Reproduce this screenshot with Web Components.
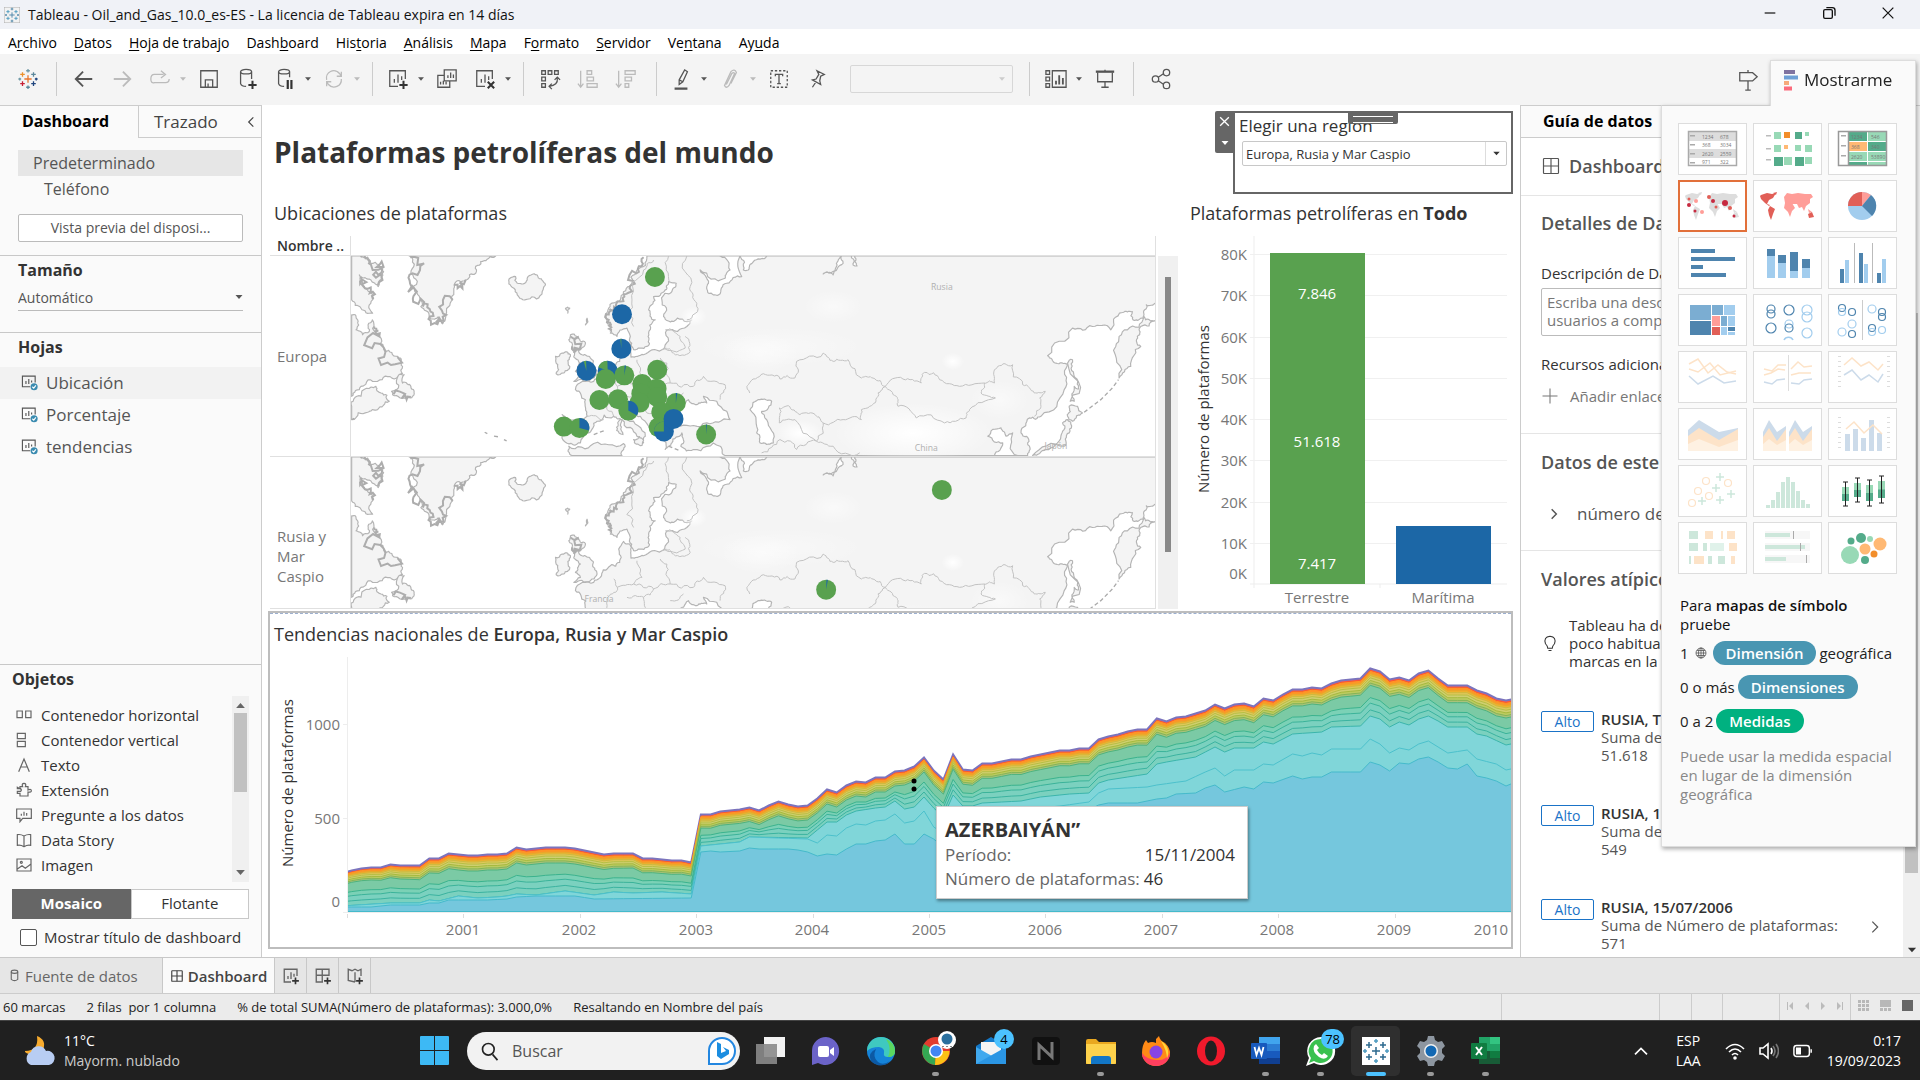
<!DOCTYPE html>
<html lang="es">
<head>
<meta charset="utf-8">
<title>Tableau - Oil_and_Gas_10.0_es-ES</title>
<style>
html,body{margin:0;height:100%}
body{font-family:"Open Sans","Noto Sans",sans-serif;font-size:15px;color:#333;background:#fff;overflow-x:hidden}
</style>
</head>
<body>
<tb-app></tb-app>
<script>
const BASE = `*{box-sizing:border-box}button,select,textarea,input{font:inherit;color:inherit;margin:0}
button{background:none;border:0;padding:0;text-align:left}h1,h2,h3,p,ul{margin:0;padding:0;font-weight:inherit}ul{list-style:none}svg{display:block}`;
function define(name, css, html, after) {
  const t = document.createElement('template');
  customElements.define(name, class extends HTMLElement {
    constructor() {
      super();
      this.attachShadow({ mode: 'open' });
    }
    connectedCallback() {
      if (this.shadowRoot.firstChild) return;
      t.innerHTML = `<style>${BASE}${css}</style>` + (typeof html === 'function' ? html(this) : html);
      this.shadowRoot.append(t.content.cloneNode(true));
      if (after) after(this, this.shadowRoot);
    }
  });
}

/* ---------- line icons, 24 x 24 ---------- */
const plus = '<path d="M18 14v9M13.500 18.500h9" stroke-width="2.200" stroke="#333"/>';
const cross = (x, y, r, c) => `<path d="M${x - r} ${y}h${2 * r}M${x} ${y - r}v${2 * r}" stroke="${c}"/>`;
const ICONS = {
  logo: cross(12, 12, 4, '#e8762c') + cross(6, 7, 2.5, '#eb912c') + cross(18, 7, 2.5, '#5b879b') + cross(6, 17, 2.5, '#c72035') + cross(18, 17, 2.5, '#1f457e') + cross(12, 3, 2, '#7099a6') + cross(12, 21, 2, '#59879b') + cross(3, 12, 1.5, '#7099a6') + cross(21, 12, 1.5, '#1f457e'),
  logoblue: '<rect x="0" y="0" width="24" height="24" fill="#f2f2f2" stroke="#aaa"/>' + cross(12, 12, 4, '#4e86a8') + cross(6, 7, 2.5, '#4e9bc0') + cross(18, 7, 2.5, '#4e9bc0') + cross(6, 17, 2.5, '#4e9bc0') + cross(18, 17, 2.5, '#4e9bc0') + cross(12, 3, 2, '#4e86a8') + cross(12, 21, 2, '#4e86a8') + cross(3, 12, 1.5, '#4e86a8') + cross(21, 12, 1.5, '#4e86a8'),
  back: '<path d="M21 12H4M11 4l-8 8 8 8" stroke-width="2"/>',
  fwd: '<path d="M3 12h17M13 4l8 8-8 8" stroke-width="2"/>',
  redo: '<path d="M16 7H6q-4 0-4 5t4 4h12q4 0 4-4M13 3l5 4-5 4"/>',
  save: '<path d="M3 3h18v18H3zM8 21v-8h8v8M11 21v-4"/>',
  dbplus: '<ellipse cx="11" cy="4" rx="6" ry="2.500"/><path d="M5 4v13q1 3 6 3M17 4v8"/>' + plus,
  dbpause: '<ellipse cx="11" cy="4" rx="6" ry="2.500"/><path d="M5 4v13q1 3 6 3M17 4v6"/><path d="M15 13v10M19 13v10" stroke-width="2.400" stroke="#333"/>',
  refresh: '<path d="M4 13A8 8 0 0 1 18 6l2 3M20 4v5h-5M20 12A8 8 0 0 1 6 18l-2-3M4 20v-5h5"/>',
  sheetplus: '<path d="M12 20H3V3h17v9M8 16v-4M12 16V7M16 13V9"/>' + plus,
  dup: '<path d="M9 2h13v12H9zM13 11V8M16 11V5M19 11V7M9 8H2v13h13v-7M5 18v-3M8 18v-4M11 18v-3"/>',
  clear: '<path d="M12 20H3V3h17v9M8 16v-4M12 16V7M16 13V9"/><path d="M15 15l7 7M22 15l-7 7" stroke-width="2.200" stroke="#333"/>',
  swap: '<path d="M3 3h4v4H3zM10 3h4v4h-4zM17 3h4v4h-4zM3 10h4v4H3zM3 17h4v4H3zM20 11q1 8-9 9M17 13l3-3 3 3M14 17l-3 3 3 3"/>',
  asc: '<path d="M4 3v17M1 17l3 4 3-4M11 3h5v4h-5zM11 10h7v4h-7zM11 17h11v4H11z"/>',
  desc: '<path d="M4 3v17M1 17l3 4 3-4M11 3h11v4H11zM11 10h7v4h-7zM11 17h4v4h-4z"/>',
  pen: '<path d="M10 13l6-11 3 2-5 11-4 3z M10 13l4 2"/><path d="M5 22.500h14" stroke-width="2.500"/>',
  clip: '<path d="M8 18l6-12q2-2 3 0L11 19q-3 4-5 0L13 4q4-4 6 1l-6 12"/>',
  text: '<path d="M3 3h18v18H3z" stroke-dasharray="2.500 2"/><path d="M8 9V7h8v2M12 7v10M10 17h4"/>',
  pin: '<path d="M12 3l8 4-4 2-1 5 1 4-9-5 4-1 3-5zM11 15l-4 6"/>',
  cards: '<path d="M8 3h15v18H8zM1 3h4v4H1zM1 10h4v4H1zM1 17h4v4H1z"/><path d="M12 18v-4M15.500 18V8M19.500 18v-7" stroke-width="2"/>',
  present: '<path d="M2 4h20" stroke-width="2.500"/><path d="M4 5v10h16V5M12 15v6M8 21h8M12 2v2"/>',
  share: '<circle cx="6" cy="12" r="3.500"/><circle cx="18" cy="5" r="3.500"/><circle cx="18" cy="19" r="3.500"/><path d="M9 10l6-4M9 14l6 4"/>',
  guide: '<path d="M3 4h14l5 4.500L17 13H3zM12 1v3M12 13v10M9 23h6"/>',
  sheet: '<path d="M13 18H2V3h18v9M7 14v-4M11 14V7M15 12V9"/><circle cx="18.500" cy="18" r="5" fill="#3a8bb0" stroke="none"/><path d="M16 18l2 2 3-4" stroke="#fff"/>',
  hcont: '<path d="M1.500 6h8v10h-8zM14.500 6h8v10h-8z"/>',
  vcont: '<path d="M2 2h12v8H2zM2 14h12v8H2z"/>',
  letter: '<path d="M4 22l8-19 8 19M7 15h10"/>',
  ext: '<path d="M6 10V7h4q-2-5 2-5t2 5h4v5q5-2 5 1t-5 2v6H6v-4H2v-3h5q2-2 0-4H2v-2z"/>',
  ask: '<path d="M1 3h22v14H10l-4 5v-5H1zM8 13v-3M12 13V7M16 13V9"/>',
  story: '<path d="M12 6Q7 3 2 4v16q5-1 10 2 5-3 10-2V4q-5-1-10 2zv16"/>',
  image: '<path d="M1.500 3h21v18h-21zM2 18l7-5 5 4 8-6"/><circle cx="8" cy="8" r="1.500"/>',
  grid: '<rect x="3" y="3" width="18" height="18" rx="1"/><path d="M12 3v18M3 12h18"/>',
  db: '<ellipse cx="12" cy="5" rx="6" ry="3"/><path d="M6 5v14q6 5 12 0V5"/>',
  gridplus: '<path d="M12 20H3V3h17v9M11 3v17M3 11h17"/>' + plus,
  storyplus: '<path d="M12 20l-9-2V3l5 2 4-2 4 2 4-2v9M12 7v13"/>' + plus,
  plus: '<path d="M12 2v20M2 12h20"/>',
  right: '<path d="M8 4l8 8-8 8"/>',
  left: '<path d="M16 4l-8 8 8 8"/>',
  bulb: '<path d="M9 19q0-3-3-6-3-9 6-10 9 1 6 10-3 3-3 6zM10 22h4"/>',
  globe: '<circle cx="12" cy="12" r="10"/><ellipse cx="12" cy="12" rx="5" ry="10"/><path d="M2 12h20M12 2v20M4 7h16M4 17h16"/>',
  close: '<path d="M4 4l16 16M20 4L4 20"/>',
  min: '<path d="M4 12h16"/>',
  restore: '<rect x="4" y="7" width="13" height="13" rx="2"/><path d="M8 4h9q4 0 4 4v8"/>',
  caret: '<path d="M5 8h14l-7 8z" fill="currentColor" stroke="none"/>',
  caretup: '<path d="M5 16h14l-7-8z" fill="currentColor" stroke="none"/>',
  up: '<path d="M3 17l9-9 9 9" stroke-width="2.500"/>',
  search: '<circle cx="10" cy="10" r="7"/><path d="M15 16l6 7"/>'
};
define('tb-icon', ':host{display:inline-flex;flex:none}svg{fill:none;stroke:currentColor}', el => {
  const s = el.getAttribute('size') || 20;
  return `<svg width="${s}" height="${s}" viewBox="0 0 24 24" stroke-width="${el.getAttribute('weight') || 1.4}" aria-hidden="true">${ICONS[el.getAttribute('name')]}</svg>`;
});

/* ---------- title bar, menu, toolbar ---------- */
define('tb-titlebar', `:host{display:flex;align-items:center;height:29px;background:#f0f2f7;color:#111;font-size:14px;padding:0 24px 0 4px}
span{margin-left:8px;flex:1}.w{display:flex;gap:43px}`,
  `<tb-icon name="logoblue" size="16"></tb-icon><span><slot></slot></span>
  <div class="w"><button aria-label="Minimizar"><tb-icon name="min" size="16" weight="1.800"></tb-icon></button><button aria-label="Restaurar"><tb-icon name="restore" size="16" weight="2"></tb-icon></button><button aria-label="Cerrar"><tb-icon name="close" size="16" weight="1.800"></tb-icon></button></div>`);

define('tb-menubar', `:host{display:block;background:#fff;color:#000;height:25px;font-size:14px}
nav{display:flex;gap:17px;padding-left:8px;line-height:27px}u{text-underline-offset:2px}`,
  '<nav>' + ['A<u>r</u>chivo', '<u>D</u>atos', '<u>H</u>oja de trabajo', 'Dash<u>b</u>oard', 'His<u>t</u>oria', '<u>A</u>nálisis', '<u>M</u>apa', 'F<u>o</u>rmato', '<u>S</u>ervidor', 'Ve<u>n</u>tana', 'Ay<u>u</u>da'].map(x => `<button>${x}</button>`).join('') + '</nav>');

const tool = (n, c = '') => `<button class="${c}" aria-label="${n}"><tb-icon name="${n}" size="22"></tb-icon></button>`;
const dd = (c = '') => `<button class="d ${c}" aria-label="Opciones"><tb-icon name="caret" size="10"></tb-icon></button>`;
define('tb-toolbar', `:host{display:flex;align-items:center;height:51px;background:#f4f4f4;color:#555}
.g{display:flex;align-items:center;justify-content:center;gap:12px;height:34px;border-right:1px solid #ccc;width:var(--w);flex:none;margin-top:-2px;padding-right:var(--p,0)}
.g:last-of-type{border:0}button{width:26px;display:flex;justify-content:center}.d{width:10px;margin:0 -4px 0 -7px}.off{color:#bbb}
select{width:163px;height:28px;border:1px solid #ccc;border-radius:2px;background:#f4f4f4;appearance:none;margin-left:8px}
.s{position:relative}.s tb-icon{position:absolute;right:6px;top:9px;color:#ccc;pointer-events:none}
.x{margin-left:auto;margin-right:159px}`,
  `<div class="g" style="--w:57px">${tool('logo')}</div>
  <div class="g" style="--w:316px">${tool('back')}${tool('fwd', 'off')}${tool('redo', 'off')}${dd('off')}${tool('save')}${tool('dbplus')}${tool('dbpause')}${dd()}${tool('refresh', 'off')}${dd('off')}</div>
  <div class="g" style="--w:151px;--p:2px">${tool('sheetplus')}${dd()}${tool('dup')}${tool('clear')}${dd()}</div>
  <div class="g" style="--w:133px;--p:4px">${tool('swap')}${tool('asc', 'off')}${tool('desc', 'off')}</div>
  <div class="g" style="--w:373px;--p:6px">${tool('pen')}${dd()}${tool('clip', 'off')}${dd('off')}${tool('text')}${tool('pin')}<span class="s"><select aria-label="Ajuste" disabled></select><tb-icon name="caret" size="10"></tb-icon></span></div>
  <div class="g" style="--w:104px;--p:2px">${tool('cards')}${dd()}${tool('present')}</div>
  <div class="g" style="--w:54px">${tool('share')}</div>
  <button class="x" aria-label="Guía de datos"><tb-icon name="guide" size="22"></tb-icon></button>`);

/* ---------- left pane ---------- */
define('tb-side', `:host{display:flex;flex-direction:column;background:#fafafa;border-right:1px solid #ccc;border-top:1px solid #ccc;color:#333;font-size:16px}
.tabs{display:flex;height:32px;line-height:31px}.tabs button{width:138px;padding:0 0 2px 22px;font-weight:700;color:#000}
.tabs .t{flex:1;display:flex;align-items:center;justify-content:space-between;border-left:1px solid #ccc;border-bottom:1px solid #ccc;padding:0 3px 0 15px;font-weight:400;font-size:17px;color:#444}
.dev{padding:12px 18px 0;color:#555}.dev button{display:block;width:100%;line-height:26px;padding-left:15px}.dev .sel{background:#e6e6e6}.dev .ph{padding-left:26px}
.dev .pv{border:1px solid #bbb;border-radius:2px;font-size:14px;line-height:26px;margin:12px 0 13px;text-align:center;padding:0;background:#fff}
h2{font-weight:700;font-size:16px;line-height:28px;border-top:1px solid #c8c8c8;padding:0 0 2px 18px}
.sz{position:relative;margin:0 18px 21px}.sz select{width:100%;height:24px;border:0;border-bottom:1px solid #bbb;background:none;appearance:none;padding:0 0 2px;font-size:14px;color:#555}
.sz tb-icon{position:absolute;right:-2px;top:5px;color:#555}
.sheets{padding-top:4px;flex:1;min-height:200px}.sheets button{display:flex;align-items:center;width:100%;height:32px;padding:0 0 2px 21px;gap:8px;font-size:17px;color:#555}.sheets li:first-child{background:#f2f2f2}
.oh{padding-left:12px}.obj{display:flex;margin-right:12px;height:186px;margin-top:1px}.obj ul{flex:1;padding-top:6px}
.obj li button{display:flex;align-items:center;gap:9px;height:25px;padding-left:16px;font-size:15px}.obj tb-icon{color:#666}
.bar{width:17px;background:#f0f0f0;display:flex;flex-direction:column;align-items:center;padding:2px 0;height:186px}.bar i{width:13px;height:79px;background:#c1c1c1;margin-bottom:auto}
.seg{display:flex;margin:7px 12px 0;height:30px}.seg button{flex:1;text-align:center;border:1px solid #c8c8c8;background:#fff;font-size:15px;padding-bottom:2px}.seg .on{background:#666;color:#fff;font-weight:700;border-color:#666}
label{display:flex;align-items:center;gap:7px;font-size:15px;padding:8px 0 10px 20px;line-height:20px;white-space:nowrap}
input{appearance:none;width:17px;height:17px;border:1px solid #555;border-radius:2px;background:#fff}`,
  `<div class="tabs"><button>Dashboard</button><button class="t">Trazado<tb-icon name="left" size="14" weight="2"></tb-icon></button></div>
  <div class="dev"><button class="sel">Predeterminado</button><button class="ph">Teléfono</button><button class="pv">Vista previa del disposi...</button></div>
  <h2>Tamaño</h2><div class="sz"><select aria-label="Tamaño"><option>Automático</option></select><tb-icon name="caret" size="12"></tb-icon></div>
  <h2>Hojas</h2><ul class="sheets">${['Ubicación', 'Porcentaje', 'tendencias'].map(s => `<li><button><tb-icon name="sheet" size="17" weight="1.600"></tb-icon>${s}</button></li>`).join('')}</ul>
  <h2 class="oh">Objetos</h2><div class="obj"><ul>${[['hcont', 'Contenedor horizontal'], ['vcont', 'Contenedor vertical'], ['letter', 'Texto'], ['ext', 'Extensión'], ['ask', 'Pregunte a los datos'], ['story', 'Data Story'], ['image', 'Imagen']].map(([i, s]) => `<li><button><tb-icon name="${i}" size="16" weight="1.800"></tb-icon>${s}</button></li>`).join('')}</ul>
  <div class="bar"><tb-icon name="caretup" size="15"></tb-icon><i></i><tb-icon name="caret" size="15"></tb-icon></div></div>
  <div class="seg"><button class="on">Mosaico</button><button>Flotante</button></div>
  <label><input type="checkbox">Mostrar título de dashboard</label>`);

/* ---------- map ---------- */
const COAST = [
  'M272 285L290 300 285 330 305 345 325 335 334 300 352 345 372 395 410 410 425 440 425 462 400 478 350 485 300 500 272 530Z',
  'M272 560L300 530 345 500 360 520 385 545 350 570 320 578 272 600Z',
  'M412 468L392 515 395 525 440 535 455 530 450 500 425 490 430 465Z',
  'M300 108L330 130 368 155 352 200 330 180 295 165 305 195 338 235 325 255 335 280 300 265 272 240 272 108Z',
  'M445 108L450 160 462 215 480 260 505 292 530 292 545 312 555 285 575 240 580 195 615 180 645 160 660 125 700 112 705 108Z',
  'M745 185L765 170 770 190 800 180 830 165 853 190 845 215 800 238 770 225 760 205Z',
  'M915 265L928 265 922 280Z', 'M980 295L975 315 978 300Z',
  'M905 400L930 405 928 440 910 460 887 462 892 435 885 410Z',
  'M930 345L950 350 972 365 955 390 965 405 990 415 1000 440 1008 465 990 480 940 485 960 470 945 455 960 430 940 410 935 380 925 360Z',
  'M1160 108L1130 150 1110 200 1080 240 1045 265 1040 300 1050 340 1070 350 1100 325 1110 350 1120 390 1160 380 1165 340 1185 300 1165 270 1180 230 1215 210 1225 185 1248 190 1235 215 1205 240 1210 290 1240 305 1295 300 1280 320 1220 330 1205 390 1150 405 1112 412 1108 370 1090 362 1075 385 1078 425 1050 435 1020 470 1000 485 945 510 975 540 980 590 905 585 905 650 915 668 960 670 985 640 1010 605 1060 590 1085 600 1130 650 1150 670 1155 650 1100 600 1110 575 1140 590 1200 640 1215 690 1235 670 1265 640 1262 680 1300 690 1380 680 1400 708 2305 708 2305 670 2285 640 2310 595 2345 590 2415 510 2425 435 2390 430 2365 408 2440 325 2500 320 2555 330 2590 278 2620 275 2622 300 2655 285 2662 255 2690 250 2690 108Z',
  'M2655 290L2605 330 2570 380 2580 475 2615 440 2645 380 2635 350 2645 320 2690 303 2690 300 2660 300Z',
  'M2425 430L2440 420 2445 470 2458 508 2445 500 2445 545 2433 545Z', 'M2430 560L2470 580 2440 605 2425 590Z',
  'M2425 600L2430 640 2415 680 2320 708 2360 690 2405 650 2410 610Z',
  'M935 708L925 680 1000 672 1090 672 1085 708Z',
  'M1075 605L1085 600 1088 645 1076 640Z', 'M1120 660L1150 662 1145 678Z'
];
const SEAS = [
  'M1255 580L1270 560 1285 540 1310 555 1340 550 1330 530 1400 575 1410 600 1340 610 1260 620Z',
  'M1380 108L1410 150 1395 175 1320 150 1345 190 1345 220 1375 225 1400 190 1445 170 1440 108Z',
  'M1470 570L1500 540 1535 545 1505 575 1520 600 1540 670 1500 670 1490 640Z',
  'M1440 108L1450 150 1465 150 1480 125 1520 108Z', 'M1690 162L1720 165 1750 130 1745 108 1730 140Z', 'M1775 108L1780 135 1792 138 1785 108Z',
  'M2185 650L2225 625 2240 650 2260 640 2275 708 2205 708 2230 670Z'
];
const BORDERS = [
  'M1470 520L1465 495 1510 462 1560 478 1605 475 1610 425 1690 400 1720 425 1765 420 1805 475 1840 475 1877 500 1855 530 1830 560 1805 570 1805 600 1750 600 1690 610 1670 665 1605 600 1558 610 1558 565 1585 558 1620 585 1670 590 1690 610',
  'M1877 500L1930 478 1985 490 1995 458 2040 480 2100 500 2175 490 2165 520 2208 535 2130 570 2120 595 2055 610 1970 595 1915 560 1910 530 1877 500',
  'M2175 490L2205 490 2215 440 2260 435 2290 495 2325 520 2358 515 2345 560 2325 590',
  'M1120 320L1115 240 1150 150 1180 120M1225 108L1232 190M1280 108L1290 200 1310 250 1280 300M1215 330L1260 350 1275 385 1205 390M1210 385L1240 400 1290 395 1275 350M1130 420L1145 470 1120 490 1180 505 1230 490 1220 430 1200 415M1230 490L1300 500 1330 470 1395 495 1380 540M1060 475L1070 510 1040 540 1060 590M1120 490L1070 500M1100 530L1150 530 1180 505M1150 530L1160 580 1220 590 1260 570M1215 590L1210 640M980 590L1030 600M1230 540L1270 520M1505 700L1560 660 1610 690 1670 665 1720 680 1800 700'
];
function roughen(d, seed, amp) {
  let s = seed;
  const rnd = () => ((s = (s * 16807) % 2147483647) / 2147483647) - .5;
  return d.replace(/M[^MZ]+Z?/g, sub => {
    const closed = sub.endsWith('Z'), n = sub.match(/\d+/g).map(Number);
    let p = [];
    for (let i = 0; i < n.length; i += 2) p.push([n[i], n[i + 1]]);
    if (closed) p.push(p[0]);
    for (let k = 0; k < 3; k++) {
      const q = [p[0]];
      for (let i = 1; i < p.length; i++) {
        const [a, b] = [p[i - 1], p[i]], dx = b[0] - a[0], dy = b[1] - a[1], l = Math.hypot(dx, dy);
        const edge = (a[0] === b[0] && (a[0] === 272 || a[0] === 2690)) || (a[1] === b[1] && (a[1] === 108 || a[1] === 708));
        if (l > 7 && !edge) { const o = rnd() * amp; q.push([(a[0] + b[0]) / 2 - dy * o, (a[1] + b[1]) / 2 + dx * o]); }
        q.push(b);
      }
      p = q;
    }
    return 'M' + p.map(v => v[0].toFixed(1) + ' ' + v[1].toFixed(1)).join('L') + (closed ? 'Z' : '');
  });
}
const GREEN = '#59a14f', BLUE = '#1c67a6';
function pie(x, y, base, other, from, to) {
  let s = `<circle cx="${x}" cy="${y}" r="30" fill="${base}"/>`;
  if (other) {
    const pt = a => `${(x + 30 * Math.sin(a * Math.PI / 180)).toFixed(1)} ${(y - 30 * Math.cos(a * Math.PI / 180)).toFixed(1)}`;
    s += `<path d="M${x} ${y}L${pt(from)}A30 30 0 ${to - from > 180 ? 1 : 0} 1 ${pt(to)}Z" fill="${other}"/>`;
  }
  return s;
}
const PINS = {
  europa: [[1184, 171, GREEN], [1085, 283, BLUE], [1083, 387, BLUE, GREEN, 354, 360], [978, 453, BLUE, GREEN, 344, 358], [1042, 453, BLUE, GREEN, 290, 358], [1036, 478, GREEN], [1092, 467, GREEN, BLUE, 2, 10], [1191, 450, GREEN], [1146, 493, GREEN], [1189, 507, GREEN], [1143, 522, GREEN], [1191, 532, GREEN], [1138, 549, GREEN], [1017, 541, GREEN], [1073, 539, GREEN], [1104, 573, GREEN, BLUE, 0, 120], [1247, 550, GREEN, BLUE, 0, 8], [1203, 577, GREEN], [1195, 623, GREEN], [1211, 636, BLUE, GREEN, 270, 360], [1240, 598, BLUE], [910, 621, GREEN], [957, 625, GREEN, BLUE, 0, 105], [1338, 645, GREEN, BLUE, 0, 5]],
  rusia: [[2047, 207, GREEN], [1699, 507, GREEN, BLUE, 2, 10]]
};
const LABELS = {
  europa: [[2047, 209, 'Rusia'], [2000, 696, 'China'], [2390, 687, 'Japón']],
  rusia: [[1016, 543, 'Francia']]
};
define('tb-map', ':host{display:block;overflow:hidden}svg{width:100%;height:auto}text{font-size:26px;fill:#b0b0b0;text-anchor:middle}',
  el => `<svg viewBox="270 108 2418 600" role="img" aria-label="Mapa">
  <defs><radialGradient id="t"><stop offset="0" stop-color="#fff"/><stop offset="1" stop-color="#fff" stop-opacity="0"/></radialGradient></defs>
  <g stroke="#b4b4b4" stroke-width="3.500" stroke-linejoin="round">
  ${COAST.map((d, i) => `<path d="${roughen(d, 77 + i * 91, .5)}" fill="#f4f4f4"/>`).join('')}
  <g stroke="none" fill="url(#t)"><ellipse cx="1960" cy="640" rx="240" ry="90"/><ellipse cx="1720" cy="260" rx="90" ry="50" opacity=".5"/><ellipse cx="1500" cy="400" rx="120" ry="60" opacity=".5"/><ellipse cx="2220" cy="540" rx="90" ry="60" opacity=".5"/><ellipse cx="1620" cy="640" rx="70" ry="40"/><ellipse cx="1300" cy="290" rx="40" ry="30"/><ellipse cx="1560" cy="380" rx="260" ry="60" opacity=".4"/><ellipse cx="2080" cy="425" rx="34" ry="26"/></g>
  ${SEAS.map((d, i) => `<path d="${roughen(d, 33 + i * 57, .4)}" fill="#fff"/>`).join('')}</g>
  <g stroke="#adadad" stroke-width="6" fill="none"><path d="${roughen('M448 112L455 160 468 215 486 260 508 290 545 310 556 285 576 240M615 180L580 195M1150 112L1128 160 1108 205 1080 245 1048 268 1045 300 1050 335M300 112L330 134 362 158 350 195M300 170L312 205 336 238M340 320L355 350 374 395 410 412M398 524L450 532M930 350L940 400 935 380', 5, 1.6)}"/></g>
  <g stroke="#c2c2c2" stroke-width="3" fill="none">${BORDERS.map((d, i) => `<path d="${roughen(d, 11 + i * 37, .45)}"/>`).join('')}</g>
  <path d="M2475 578L2525 540 2560 505 2578 480M272 600L280 596M672 638L680 642M700 650L714 652M730 660L738 664M1000 645L1035 632M1225 680L1262 695" stroke="#aaa" stroke-width="4" stroke-dasharray="12 8" fill="none"/>
  ${LABELS[el.getAttribute('region')].map(l => `<text x="${l[0]}" y="${l[1]}">${l[2]}</text>`).join('')}
  ${PINS[el.getAttribute('region')].map(p => pie(...p)).join('')}</svg>`);

define('tb-location', `:host{display:block}h2{font-size:18px;line-height:36px;margin-bottom:5px;padding-left:4px}
.grid{display:grid;grid-template-columns:80px minmax(0,1fr) 22px;grid-template-rows:20px auto 152px}
.h{font-weight:600;font-size:14px;line-height:20px;padding-left:7px}.r{color:#777;line-height:20px;padding:0 20px 0 7px;display:flex;align-items:center}
.grid>*{border-bottom:1px solid #e0e0e0}.m{border-left:1px solid #e0e0e0;border-right:1px solid #e0e0e0;min-width:0}.s{grid-row:2/4;grid-column:3;background:#f0f0f0;margin-left:2px;padding:21px 7px 57px;border:0}.s i{display:block;height:100%;background:#888}.z{border:0}
.c{border-bottom:1px solid #e0e0e0}tb-map.c{height:152px}.k{padding-top:48px}`,
  `<h2>Ubicaciones de plataformas</h2><div class="grid"><div class="h">Nombre ..</div><div class="m"></div><div class="z"></div>
  <div class="r">Europa</div><tb-map class="m" region="europa"></tb-map><div class="s"><i></i></div>
  <div class="r k">Rusia y Mar Caspio</div><tb-map class="m c" region="rusia"></tb-map></div>`);

/* ---------- bar chart ---------- */
define('tb-bars', `:host{display:block}h2{font-size:18px;line-height:36px;margin-bottom:5px;white-space:nowrap}b{font-weight:700}
svg{width:100%;height:auto}text{font-size:15px;fill:#777}.e{text-anchor:end}.m{text-anchor:middle}.v{fill:#fff}.a{fill:#333}`,
  `<h2>Plataformas petrolíferas en <b>Todo</b></h2><svg viewBox="0 0 323 372" role="img" aria-label="Barras">
  <path d="M64 0V352M60 348H317M190 348v4" stroke="#ededed" fill="none"/>
  ${[18, 59, 101, 142, 183, 224, 266, 307].map((y, i) => `<path d="M60 ${y}.5H317" stroke="#f0f0f0"/><text class="e" x="57" y="${y + 6}">${80 - i * 10}K</text>`).join('')}<text class="e" x="57" y="343">0K</text>
  <rect x="80" y="17" width="95" height="331" fill="${GREEN}"/><rect x="206" y="290" width="95" height="58" fill="${BLUE}"/>
  <g class="m"><text class="v" x="127" y="63">7.846</text><text class="v" x="127" y="211">51.618</text><text class="v" x="127" y="333">7.417</text><text x="127" y="367">Terrestre</text><text x="253" y="367">Marítima</text><text class="a" transform="translate(19 173) rotate(-90)">Número de plataformas</text></g></svg>`);

/* ---------- stacked area chart: band limits by month ---------- */
const TOP = [38, 41, 43, 44, 44, 47, 46, 46, 46, 53, 53, 58, 57, 56, 56, 57, 57, 58, 64, 62, 63, 64, 64, 64, 63, 61, 59, 57, 58, 58, 58, 53, 53, 52, 51, 51, 49, 97, 97, 100, 101, 102, 104, 101, 106, 110, 107, 105, 106, 113, 122, 119, 126, 130, 129, 134, 134, 140, 141, 145, 154, 141, 132, 157, 142, 141, 148, 148, 150, 152, 152, 155, 157, 159, 161, 161, 163, 163, 172, 175, 177, 180, 182, 182, 193, 190, 194, 195, 198, 201, 207, 203, 207, 208, 205, 213, 211, 217, 222, 222, 224, 223, 228, 231, 232, 233, 243, 240, 232, 234, 231, 238, 241, 233, 226, 226, 226, 221, 218, 213, 211, 213];
const keyed = pts => TOP.map((_, k) => {
  let i = pts.findIndex(p => p[0] >= k);
  if (i <= 0) return pts[Math.max(i, 0)][1];
  const [a, b] = [pts[i - 1], pts[i]];
  return a[1] + (b[1] - a[1]) * (k - a[0]) / (b[0] - a[0]);
});
const B1 = keyed([[0, 5], [3, 5], [5, 7], [8, 7], [9, 9], [10, 9], [11, 12], [15, 12], [17, 13], [18, 15], [20, 16], [24, 16], [26, 13], [36, 14], [37, 60], [38, 61], [39, 60], [41, 61], [42, 64], [43, 63], [46, 63], [47, 62], [48, 60], [49, 56], [50, 58], [51, 57], [52, 63], [53, 68], [54, 68], [55, 71], [56, 72], [57, 78], [58, 68], [59, 68], [60, 78], [61, 73], [62, 65], [63, 80], [66, 88], [77, 102], [78, 107], [79, 109], [82, 109], [84, 113], [85, 114], [86, 118], [88, 119], [89, 124], [90, 127], [91, 120], [93, 125], [94, 123], [95, 130], [96, 129], [98, 136], [99, 133], [100, 135], [101, 135], [102, 140], [105, 140], [106, 150], [107, 147], [108, 141], [109, 149], [110, 148], [111, 153], [112, 155], [113, 150], [114, 144], [115, 143], [116, 148], [117, 136], [118, 134], [119, 131], [120, 126], [121, 130]]);
const B3 = keyed([[0, 6], [5, 9], [8, 9], [9, 12], [10, 11], [12, 16], [14, 14], [16, 15], [17, 16], [18, 18], [20, 17], [23, 21], [26, 17], [28, 20], [30, 19], [33, 20], [36, 18], [37, 66], [41, 70], [42, 75], [48, 74], [49, 82], [50, 90], [51, 90], [52, 97], [53, 101], [55, 104], [56, 105], [57, 111], [58, 103], [59, 105], [60, 115], [61, 104], [62, 95], [63, 117], [64, 106], [65, 106], [66, 109], [70, 111], [72, 115], [75, 118], [77, 119], [78, 129], [79, 132], [83, 138], [84, 148], [85, 150], [88, 155], [89, 160], [90, 165], [91, 160], [92, 164], [94, 164], [95, 170], [96, 168], [98, 178], [101, 180], [102, 185], [105, 186], [106, 196], [107, 193], [108, 185], [109, 190], [110, 187], [111, 193], [112, 196], [113, 191], [114, 185], [116, 185], [117, 178], [118, 176], [120, 167], [121, 169]]);
const B2 = keyed([[0, 6], [5, 9], [8, 9], [9, 12], [10, 11], [12, 16], [14, 14], [16, 15], [17, 16], [18, 18], [20, 17], [23, 21], [26, 17], [28, 20], [30, 19], [33, 20], [36, 18], [37, 66], [41, 70], [42, 75], [48, 73], [49, 69], [50, 77], [51, 76], [52, 84], [53, 88], [54, 87], [55, 91], [56, 92], [57, 98], [58, 89], [59, 91], [60, 101], [61, 85], [62, 79], [63, 95], [66, 98], [74, 106], [77, 110], [78, 119], [79, 123], [83, 125], [84, 127], [87, 131], [89, 140], [90, 144], [91, 136], [92, 142], [94, 142], [95, 148], [96, 147], [98, 158], [99, 156], [100, 159], [101, 157], [102, 163], [105, 163], [106, 173], [107, 168], [108, 159], [109, 164], [110, 162], [111, 168], [112, 171], [113, 165], [114, 159], [116, 162], [117, 153], [119, 148], [120, 142], [121, 144]]);
const GAP = keyed([[0, 11], [12, 15], [24, 15], [36, 13], [48, 14], [60, 14], [80, 15], [100, 16], [121, 17]]);
function areas() {
  const X = k => 72 + 9.7 * k;
  const line = a => a.map((h, k) => `${X(k).toFixed(1)} ${(255 - h).toFixed(1)}`).join('L');
  const area = (a, fill, stroke, w = 1) => `<path d="M${X(0)} 255L${line(a)}L${X(121)} 255Z" fill="${fill}"/><path d="M${line(a)}" fill="none" stroke="${stroke}" stroke-width="${w}"/>`;
  const mix = f => TOP.map((h, k) => h - GAP[k] * (1 - f));
  const teal = f => TOP.map((h, k) => B3[k] + (h - GAP[k] - B3[k]) * f);
  return [
    area(TOP.map(h => h + .5), '#ff5a4a', '#7b74bd', 2), area(mix(.9), '#f8552f', '#f8552f'), area(mix(.86), '#ff9526', '#ff9526'),
    area(mix(.72), '#f2b12e', '#e6a92c'), area(mix(.6), '#dfc85a', '#ccba40'), area(mix(.46), '#cfcf70', '#b7bf45'), area(mix(.3), '#bccb60', '#a6ba3f'), area(mix(.14), '#a8c27a', '#84b458'),
    area(teal(1), '#7bcaa5', '#4db37f'), area(teal(.6), '#7bd1b6', '#3bb38e'), area(teal(.42), '#7bd1bf', '#3bb39a'), area(teal(.2), '#7bd1bf', '#3bb3a0'),
    area(B3, '#80d6d9', '#3bb5ac'), area(B2, '#80d6d9', '#4cc1cc'), area(B1, '#75c7dd', '#45bacb')
  ].join('');
}
define('tb-trend', `:host{display:block;position:relative;border:2px solid #bdbdbd;background:#fff}
:host::before{content:"";display:block;border-top:1px dashed #9db0cf;margin-bottom:-1px}
h2{font-size:18px;line-height:42px;padding:0 0 2px 4px}b{font-weight:600}svg{width:100%;height:auto}
text{font-size:15px;fill:#777}.e{text-anchor:end}.m{text-anchor:middle}.a{fill:#333}`,
  `<h2>Tendencias nacionales de <b>Europa, Rusia y Mar Caspio</b></h2>
  <svg viewBox="0 0 1241 290" role="img" aria-label="Tendencias"><defs><clipPath id="c"><rect x="78" width="1163" height="256"/></clipPath></defs>
  <path d="M77.500 0V256M73 67.500h5M73 161.500h5M73 255.500H1241" stroke="#ededed" fill="none"/><g clip-path="url(#c)">${areas()}</g>
  <path d="M78 254.500H1241" stroke="#45bacb"/><path d="M${Array.from({ length: 10 }, (_, i) => `${77 + Math.round(116.4 * i)}.5 257v4`).join('M')}" stroke="#ddd"/>
  <text class="e" x="70" y="73">1000</text><text class="e" x="70" y="167">500</text><text class="e" x="70" y="250">0</text>
  <g class="m">${[193, 309, 426, 542, 659, 775, 891, 1007, 1124, 1221].map((x, i) => `<text x="${x}" y="278">${2001 + i}</text>`).join('')}
  <text class="a" transform="translate(23 126) rotate(-90)">Número de plataformas</text></g>
  <circle cx="644" cy="124" r="2.500" fill="#000"/><circle cx="644" cy="132" r="2.500" fill="#000"/></svg><slot></slot>`);
define('tb-tooltip', `:host{display:block;position:absolute;left:666px;top:193px;box-sizing:border-box;width:312px;padding:9px 12px 7px 8px;background:#fff;border:1px solid #ccc;box-shadow:1px 2px 3px #0006;font-size:17px;line-height:24px;color:#666}
h3{font-size:20px;font-weight:700;color:#333;line-height:27px}p{display:flex;justify-content:space-between;white-space:nowrap}p.l{justify-content:start;gap:4px}span{color:#333}`,
  `<h3>AZERBAIYÁN”</h3><p>Período: <span>15/11/2004</span></p><p class="l">Número de plataformas: <span>46</span></p>`);

define('tb-filter', `:host{display:block;box-sizing:border-box;position:relative;width:280px;height:83px;border:2px solid #666;background:#fff;padding:1px 4px 0 4px}
label{display:block;font-size:17px;line-height:24px;padding-bottom:3px}.s{position:relative;margin-left:3px}
select{display:block;width:100%;height:25px;border:1px solid #c8c8c8;border-radius:2px;background:#fff;appearance:none;font-size:13px;padding:0 3px}
.s tb-icon{position:absolute;right:0;top:1px;height:23px;width:22px;border-left:1px solid #ddd;align-items:center;justify-content:center;pointer-events:none}
.h{position:absolute;left:-20px;top:-2px;width:19px;height:42px;background:#666;color:#fff;display:flex;flex-direction:column;align-items:center;gap:9px;padding-top:4px;border-radius:2px 0 0 2px}.h button{display:flex}
.g{position:absolute;left:113px;top:-2px;width:50px;height:13px;background:#666;border-radius:0 0 2px 2px;padding:5px 5px 0}.g::before{content:"";display:block;height:5px;border:1px solid #fff;border-width:1px 0}`,
  `<label for="r">Elegir una región</label><div class="s"><select id="r"><option>Europa, Rusia y Mar Caspio</option></select><tb-icon name="caret" size="11"></tb-icon></div>
  <div class="h"><button aria-label="Quitar"><tb-icon name="close" size="13" weight="2.400"></tb-icon></button><button aria-label="Más opciones"><tb-icon name="caret" size="12"></tb-icon></button></div><div class="g"></div>`);

define('tb-canvas', `:host{display:block;background:#fff;padding:6px 7px 8px 8px;min-width:0}
header{display:flex;justify-content:space-between;height:84px}h1{font-size:28px;font-weight:700;line-height:82px;padding-left:4px}
.r{display:grid;grid-template-columns:minmax(0,1fr) 323px;gap:12px;margin-bottom:2px}tb-trend{margin-left:-2px}`,
  `<header><h1>Plataformas petrolíferas del mundo</h1><tb-filter></tb-filter></header>
  <div class="r"><tb-location></tb-location><tb-bars></tb-bars></div><tb-trend><tb-tooltip></tb-tooltip></tb-trend>`);

/* ---------- data guide ---------- */
define('tb-outlier', `:host{display:flex;align-items:start;gap:7px;height:94px;line-height:18px;color:#555}
button{width:53px;height:21px;line-height:18px;border:1px solid #1a73c7;border-radius:2px;color:#1a73c7;text-align:center;flex:none;font-size:14px}b{font-weight:600;color:#333}div{width:250px;flex:none;font-size:15px;white-space:nowrap;margin-top:-1px}tb-icon{margin:20px 0 0 9px}`,
  '<button>Alto</button><div><b><slot name="t"></slot></b><br>Suma de Número de plataformas:<br><slot></slot></div><tb-icon name="right" size="16" weight="1.800"></tb-icon>');
define('tb-guide', `:host{display:flex;background:#fff;border-left:1px solid #ccc;border-top:1px solid #ccc;color:#555;overflow:hidden}
.b{flex:1;min-width:0}h2{font-weight:700;font-size:16px;color:#000;height:32px;line-height:31px;padding-left:22px;border-bottom:1px solid #ccc;background:#fafafa}
section{padding:0 0 0 20px;border-bottom:1px solid #e5e5e5;white-space:nowrap}h3{font-size:18px;font-weight:600;line-height:24px}
.d{display:flex;gap:8px;align-items:center;height:58px;padding-bottom:2px}.det{height:238px;padding-top:15px}label,.rs{display:block;color:#333;font-size:15px;line-height:20px}label{margin:28px 0 5px}
textarea{display:block;width:340px;height:48px;border:1px solid #bbb;resize:none;padding:4px 5px;font-size:15px;line-height:18px;overflow:hidden;border-radius:2px}textarea::placeholder{color:#777}
.rs{margin:18px 0 12px}.add{display:flex;gap:11px;align-items:center;line-height:20px;font-size:15px;color:#777}
.da{height:117px;padding-top:16px}.da button{display:flex;gap:16px;align-items:center;margin:28px 0 0 6px;font-size:17px;line-height:24px}
.v{padding-top:16px;border:0;height:404px;overflow:hidden}.tip{display:flex;gap:10px;align-items:center;line-height:18px;margin:25px 0 41px;color:#333}
.bar{width:17px;background:#f0f0f0;display:flex;flex-direction:column;justify-content:end;align-items:center}.bar i{width:13px;height:560px;background:#c1c1c1;margin-bottom:70px}.bar tb-icon{color:#333}`,
  `<div class="b"><h2>Guía de datos</h2><section class="d"><tb-icon name="grid" size="20"></tb-icon><h3>Dashboard</h3></section>
  <section class="det"><h3>Detalles de Dashboard</h3><label for="ds">Descripción de Dashboard</label><textarea id="ds" placeholder="Escriba una descripción para ayudar a los usuarios a comprender este dashboard"></textarea>
  <p class="rs">Recursos adicionales</p><button class="add"><tb-icon name="plus" size="18"></tb-icon>Añadir enlace</button></section>
  <section class="da"><h3>Datos de este Dashboard</h3><button><tb-icon name="right" size="14" weight="2.500"></tb-icon>número de plataformas</button></section>
  <section class="v"><h3>Valores atípicos</h3><div class="tip"><tb-icon name="bulb" size="18"></tb-icon><p>Tableau ha detectado<br>poco habituales en las<br>marcas en la vista.</p></div>
  <tb-outlier><span slot="t">RUSIA, Terrestre</span>51.618</tb-outlier><tb-outlier><span slot="t">RUSIA, 15/08/2006</span>549</tb-outlier><tb-outlier><span slot="t">RUSIA, 15/07/2006</span>571</tb-outlier></section></div>
  <div class="bar"><i></i><tb-icon name="caret" size="14"></tb-icon></div>`);

/* ---------- show me ---------- */
const R = (x, y, w, h, c) => `<rect x="${x}" y="${y}" width="${w}" height="${h}" fill="${c}"/>`;
const O = (x, y, r, c) => `<circle cx="${x}" cy="${y}" r="${r}" fill="none" stroke="${c}" stroke-width="1.200"/>`;
const L = (d, c, w = 1.5) => `<path d="${d}" fill="none" stroke="${c}" stroke-width="${w}"/>`;
const F = (d, c) => `<path d="${d}" fill="${c}"/>`;
const C = (x, y, r, c) => `<circle cx="${x}" cy="${y}" r="${r}" fill="${c}"/>`;
const dk = '#4e84ae', lt = '#a2cdee', md = '#7badd2', g1 = '#98d9b6', g2 = '#54ab8a', pg = '#cde7db', po = '#fde3c8', pb = '#ccdbea', rd = '#e15f57', pk = '#ff9d98', or = '#ffb974';
const world = (a, b) => F('M8 15l6-2 5 1 4-1-3 5-4 2-2 4 3 1-1 1-4-3-4-4-1-3zM20 13l4-1-1 3zM17 26l5 3-2 5-2 6-2-5-1-5z', a) + F('M31 17l3-4 5 1 6-1 7 1 6 0 2 3-3 2 0 4-4 3-2 5-2-4-3 1-2-4-4 0-2 0-6-1zM32 23l7 0 3 5-3 3-2 6-2-5-4-4zM55 29l4 3-3 1z', b) + F('M55 34l4-2 2 5-5 1z', a);
const tx = (x, y, t) => `<text x="${x}" y="${y}">${t}</text>`;
const rows = [['1234', '678'], ['368', '3034'], ['2620', '2559'], ['971', '322']];
const THUMBS = [
  ['Tabla de texto', R(10, 8, 49, 35, '#fff') + R(10, 8, 49, 10, '#ddd') + R(10, 26, 49, 9, '#ddd') + L('M10.500 8.500h48v34h-48z', '#aaa') + rows.map((r, i) => R(12, 12 + i * 9, 5, 1.5, '#aaa') + tx(24, 15.5 + i * 8.5, r[0]) + tx(42, 15.5 + i * 8.5, r[1])).join('')],
  ['Mapa de calor', [13, 26, 37].map(y => R(13, y - 1, 5, 1.5, '#bbb')).join('') + R(21, 9, 7, 7, g1) + R(31, 9, 6, 6, '#f28e2b') + R(42, 9, 7, 7, g2) + R(52, 9, 4, 4, g1) + R(21, 22, 7, 7, g1) + R(31, 22, 4, 4, or) + R(42, 22, 6, 6, g1) + R(52, 22, 7, 7, g1) + R(21, 34, 9, 9, g2) + R(31, 34, 8, 8, g1) + R(42, 34, 9, 9, g2) + R(52, 34, 7, 7, g1)],
  ['Tabla de resalte', R(20, 9, 19, 9, g2) + R(40, 9, 19, 9, g1) + R(20, 19, 19, 9, or) + R(40, 19, 19, 9, g2) + R(20, 29, 19, 9, g1) + R(40, 29, 19, 9, g1) + R(20, 39, 19, 4, g2) + R(40, 39, 19, 4, g1) + L('M10.500 8.500h48v34h-48zM20.500 8.500v34', '#999') + tx(23, 15.5, '1234') + tx(43, 15.5, '546') + tx(23, 26, '368') + tx(43, 26, '340') + tx(23, 36, '2620') + tx(43, 36, '53890') + [12, 22, 32].map(y => R(13, y, 5, 1.5, '#aaa')).join('')],
  ['Mapas de símbolos', world('#ddd', '#ddd') + C(11, 25, 2, '#c72a40') + C(18, 21, 2, pk) + C(24, 32, 2, pk) + C(17, 31, 1.5, '#c72a40') + C(31, 17, 2, rd) + C(35, 21, 2, '#c72a40') + C(38, 27, 1.5, rd) + C(47, 23, 3, '#c72a40') + C(52, 28, 2, rd) + C(56, 36, 1.5, '#c72a40') + C(11, 19, 1.5, rd), 'sel'],
  ['Mapas', world(rd, pk)],
  ['Gráfico circular', C(34, 26, 14, '#a2cdee') + F('M34 26V12A14 14 0 0 0 20 26z', rd) + F('M34 26V12A14 14 0 0 1 43 15z', pk) + F('M34 26L43 15A14 14 0 0 1 44 36z', dk)],
  ['Barras horizontales', R(13, 12, 24, 4, dk) + R(13, 20, 44, 4, dk) + R(13, 28, 12, 4, dk) + R(13, 36, 35, 4, dk)],
  ['Barras apiladas', R(14, 12, 8, 29, lt) + R(14, 12, 8, 7, dk) + R(25, 18, 8, 23, lt) + R(25, 18, 8, 8, dk) + R(37, 15, 8, 26, lt) + R(37, 15, 8, 19, dk) + R(49, 22, 8, 19, lt) + R(49, 22, 8, 9, dk)],
  ['Barras paralelas', R(12, 32, 4, 14, dk) + R(17, 23, 4, 23, lt) + R(31, 16, 4, 30, dk) + R(36, 27, 4, 19, lt) + R(49, 36, 4, 10, dk) + R(54, 22, 4, 24, lt) + L('M26.500 6v40M44.500 6v40', '#bbb', 1)],
  ['Mapas de árbol', R(12, 11, 21, 15, md) + R(12, 27, 21, 14, dk) + R(34, 11, 11, 10, md) + R(46, 11, 11, 10, lt) + R(34, 22, 8, 10, pk) + R(43, 22, 6, 10, md) + R(50, 22, 7, 10, lt) + R(34, 33, 8, 8, rd) + R(43, 33, 6, 8, lt) + R(50, 33, 7, 4, dk) + R(50, 38, 7, 3, lt)],
  ['Vistas circulares', O(18, 15, 4, dk) + O(18, 20, 4, dk) + O(18, 34, 5, dk) + O(36, 16, 5, dk) + O(36, 30, 4, lt) + O(36, 34, 4, dk) + L('M31 46a5 5 0 0 1 9 0', lt) + O(54, 16, 5, lt) + O(54, 23, 5, lt) + O(54, 39, 5, lt)],
  ['Círculos paralelos', O(14, 14, 3.5, dk) + O(14, 18, 3.5, lt) + O(24, 18, 3.5, dk) + O(24, 30, 4, lt) + O(14, 38, 4, lt) + O(24, 40, 3.5, dk) + O(44, 15, 4, lt) + O(54, 18, 3.5, dk) + O(54, 23, 3.5, dk) + O(44, 34, 3.5, dk) + O(44, 38, 3.5, lt) + O(54, 36, 3.5, lt) + L('M34.500 6v40', '#ccc', 1)],
  ['Líneas (continuas)', L('M11 13l9-5 10 14 10-8 9 7 9 2', po) + L('M11 18l9 3 12-9 10 12 16-4', po) + L('M11 25l9 8 15-8 11 7 12-2', pb)],
  ['Líneas (discretas)', L('M11 18l8 2 6-6 8 0M38 18l7-7 6 5 8-1M11 24l7-2 7-4 7 1M38 24l8-2 12 0', po) + L('M11 31l8 2 5-4 8-1M38 32l8 1 5-4 8-1', pb) + L('M35.500 4v36', '#ddd', 1)],
  ['Líneas dobles', L('M16 14l8-7 9 8 8-4 9 8 5-6', po) + L('M16 24l8-5 9 10 8-5 9 7 5-8', pb) + L('M11.500 5v34M60.500 5v34', '#ddd', 3).replaceAll('fill=', 'stroke-dasharray="1 4" fill=')],
  ['Áreas (continuas)', F('M10 22l11-10 20 12 19-4v23H10z', pb) + F('M10 28l11-8 20 12 19-11v22H10z', po) + F('M10 36l11-5 20 8 19-7v11H10z', '#fef1e2')],
  ['Áreas (discretas)', F('M10 24l6-12 8 12 9-6v25H10zM36 24l6-12 8 12 9-6v25H36z', pb) + F('M10 29l6-9 8 13 9-12v22H10zM36 29l6-9 8 13 9-12v22H36z', po) + F('M10 36l6-5 8 6 9-5v11H10zM36 36l6-5 8 6 9-5v11H36z', '#fef1e2')],
  ['Combinación doble', R(17, 26, 5, 17, pb) + R(25, 21, 5, 22, pb) + R(33, 30, 5, 13, pb) + R(41, 12, 5, 31, pb) + R(49, 25, 5, 18, pb) + L('M18 21l8-7 10 11 9-8 9 9', po) + L('M11.500 9v34M60.500 9v34', '#ddd', 3).replaceAll('fill=', 'stroke-dasharray="1 4" fill=')],
  ['Diagrama de dispersión', [[14, 38], [20, 26], [28, 16], [31, 31], [50, 18]].map(p => O(p[0], p[1], 3.5, po)).join('') + L('M42 8v8M38 12h8M38 19v8M34 23h8M53 25v8M49 29h8M42 31v8M38 35h8M24 32v8M20 36h8', pg)],
  ['Histograma', [3, 8, 16, 26, 31, 26, 17, 8, 4].map((h, i) => R(13 + i * 5, 43 - h, 4, h, pg)).join('')],
  ['Diagrama de caja', [[14, 22, 14], [26, 18, 14], [38, 20, 16], [50, 16, 17]].map(p => R(p[0], p[1], 7, p[2], g1) + R(p[0], p[1] + p[2] / 2, 7, p[2] / 2, g2) + L(`M${p[0] + 3.5} ${p[1] - 5}v${p[2] + 10}M${p[0] + 1} ${p[1] - 5}h5M${p[0] + 1} ${p[1] + p[2] + 5}h5`, '#222', 1)).join('')],
  ['Gráfico de Gantt', R(11, 9, 9, 8, pg) + R(27, 9, 8, 8, po) + R(43, 9, 2, 8, po) + R(49, 9, 8, 8, po) + R(11, 21, 9, 8, pg) + R(25, 21, 4, 8, pg) + R(32, 21, 14, 8, '#e0f2ea') + R(51, 21, 8, 8, po) + R(11, 34, 2, 8, pg) + R(16, 34, 10, 8, po) + R(30, 34, 4, 8, pg) + R(40, 34, 7, 8, pg) + R(53, 34, 4, 8, po)],
  ['Gráfico de viñetas', [9, 21, 33].map((y, i) => R(12, y, 45, 8, '#f7f7f7') + R(12, y + 2, [25, 40, 21][i], 4, pg) + R([40, 47, 53][i], y, 1, 8, '#aaa')).join('')],
  ['Burbujas', C(22, 33, 9, g1) + C(23, 19, 3.5, g2) + C(33, 16, 5, g2) + C(42, 17, 3, g1) + C(52, 22, 6.5, or) + C(37, 27, 5.5, or) + C(46, 32, 3.5, '#f28e2b') + C(37, 38, 4, g2)]
];
define('tb-showme', `:host{display:block;position:absolute;right:4px;top:60px;width:255px;color:#222;filter:drop-shadow(1px 2px 2px #0005)}
.t{display:flex;align-items:center;gap:6px;width:146px;height:46px;margin-left:auto;margin-bottom:-1px;padding:0 0 8px 13px;background:#fafafa;border:1px solid #ddd;border-bottom:0;position:relative;font-size:17px}
.p{background:#fafafa;border:1px solid #ddd;border-top-color:#ccc;padding:17px 16px 42px;font-size:15px}
.g{display:grid;grid-template-columns:repeat(3,69px);gap:5px 6px}.g button{width:69px;height:52px;background:#fff;border:1px solid #ddd;overflow:hidden}.g svg{margin:-1px}.g .sel{border:2px solid #e2703a}.g .sel svg{margin:-2px}
.g text{font-size:5px;fill:#777}
.i{padding:22px 0 0 2px;line-height:19px;color:#111;white-space:nowrap}.i b{font-weight:600}.l{display:flex;align-items:center;gap:3px;height:24px;margin-top:10px;padding-left:2px}.i+.l{margin-top:7px}
.pill{background:#4996b2;color:#fff;border-radius:12px;line-height:24px;padding:0 13px;font-weight:600}.m{background:#00b180}.n{color:#888;padding:14px 0 0 2px;line-height:19px;white-space:nowrap}.l tb-icon{margin:0 3px;color:#555}`,
  `<button class="t"><svg width="14" height="22" viewBox="0 0 14 22"><path d="M0 1h11v4H0z" fill="#8073a0"/><path d="M0 6.500h14v4H0z" fill="#6fa0d6"/><path d="M0 12h5v4H0z" fill="#f6a97a"/><path d="M0 17.500h8v4H0z" fill="#fb6b7c"/></svg>Mostrarme</button>
  <div class="p"><div class="g">${THUMBS.map(t => `<button class="${t[2] || ''}" aria-label="${t[0]}"><svg width="69" height="52" viewBox="0 0 69 52">${t[1]}</svg></button>`).join('')}</div>
  <p class="i">Para <b>mapas de símbolo</b><br>pruebe</p><div class="l">1 <tb-icon name="globe" size="12" weight="1.600"></tb-icon><span class="pill">Dimensión</span> geográfica</div>
  <div class="l">0 o más <span class="pill">Dimensiones</span></div><div class="l">0 a 2 <span class="pill m">Medidas</span></div>
  <p class="n">Puede usar la medida espacial<br>en lugar de la dimensión<br>geográfica</p></div>`);

/* ---------- sheet tabs and status ---------- */
define('tb-tabs', `:host{display:flex;box-sizing:border-box;height:37px;background:#e6e6e6;border-top:1px solid #c8c8c8;border-bottom:1px solid #ccc;color:#666;font-size:15px}
button{display:flex;align-items:center;border-right:1px solid #c8c8c8;gap:4px}.f{width:163px;padding-left:8px}.a{width:112px;background:#fafafa;font-weight:600;color:#444;justify-content:center}.n{width:32px;justify-content:center}`,
  `<button class="f"><tb-icon name="db" size="13" weight="2"></tb-icon>Fuente de datos</button><button class="a"><tb-icon name="grid" size="14" weight="2"></tb-icon>Dashboard</button>
  ${['sheetplus', 'gridplus', 'storyplus'].map(n => `<button class="n" aria-label="Nueva hoja"><tb-icon name="${n}" size="18" weight="1.800"></tb-icon></button>`).join('')}`);
define('tb-status', `:host{display:flex;height:26px;background:#ebebeb;color:#222;font-size:13px;line-height:26px;padding-left:3px;white-space:pre}
.t{display:flex;gap:21px;flex:1}.c{border-left:1px solid #ccc;width:var(--w)}.c svg{margin:6px auto}`,
  `<div class="t"><span>60 marcas</span><span>2 filas  por 1 columna</span><span>% de total SUMA(Número de plataformas): 3.000,0%</span><span>Resaltando en Nombre del país</span></div>
  ${[158, 32, 31, 57].map(w => `<div class="c" style="--w:${w}px"></div>`).join('')}
  <div class="c" style="--w:71px"><svg width="58" height="12" viewBox="0 0 58 12" fill="#bbb"><path d="M1 2h1v8H1zM7 2v8L3 6zM23 2v8l-4-4zM35 2v8l4-4zM51 2v8l4-4zM56 2h1v8h-1z"/></svg></div>
  <div class="c" style="--w:70px"><svg width="56" height="12" viewBox="0 0 56 12" fill="#b8b8b8"><path d="M0 0h3v3H0zM4 0h3v3H4zM8 0h3v3H8zM0 4h3v3H0zM4 4h3v3H4zM8 4h3v3H8zM0 8h3v3H0zM4 8h3v3H4zM8 8h3v3H8zM22 0h11v7H22zM22 8h3v3h-3zM26 8h3v3h-3zM30 8h3v3h-3z"/><path d="M44 0h11v11H44z" fill="#666"/></svg></div>`);

/* ---------- taskbar ---------- */
const APPS = [
  ['Vista de tareas', '<path d="M8 1h21v20H8z" fill="#f2f2f2"/><path d="M0 8h21v20H0z" fill="#8a8a8a" opacity=".9"/>'],
  ['Chat', '<path d="M15 1a14 14 0 1 1-8 26l-6 2V15A14 14 0 0 1 15 1z" fill="#6b63c8"/><rect x="7" y="10" width="11" height="11" rx="2" fill="#fff"/><path d="M19 14l4-3v9l-4-3z" fill="#fff"/>'],
  ['Edge', '<circle cx="15" cy="15" r="14" fill="#1583d8"/><path d="M1 15A14 14 0 0 1 29 15q0 6-7 6-5 0-4-4 1-5-5-6-8 0-12 4z" fill="#3fc9c0"/><path d="M20 3a14 14 0 0 1 9 12q0 6-7 6 4-9-2-18z" fill="#5bd75f"/><path d="M10 13q-4 8 2 13 5 4 12-1l-3 3Q12 32 5 25q-4-8 5-12z" fill="#0c59a4"/>'],
  ['Chrome', '<circle cx="15" cy="15" r="14" fill="#e33b2e"/><path d="M15 15L3 8A14 14 0 0 0 14 29z" fill="#34a853"/><path d="M15 15h13.500A14 14 0 0 1 14 29z" fill="#fbc116"/><circle cx="15" cy="15" r="7" fill="#fff"/><circle cx="15" cy="15" r="5.500" fill="#4285f4"/><circle cx="26" cy="4" r="9" fill="#fff"/><circle cx="26" cy="3" r="5.500" fill="#2a6f9e"/><path d="M21 10.500h10" stroke="#888" stroke-dasharray="2 2"/>', 'run'],
  ['Correo', '<path d="M0 10L15 1l15 9v18H0z" fill="#1378c8"/><path d="M5 6h20v10L15 21 5 16z" fill="#f4f4f4"/><path d="M0 11l30 17H0z" fill="#41a9ee"/><path d="M30 11L0 28h30z" fill="#2b96e4"/>', '', '4'],
  ['N', '<rect x="1" y="1" width="28" height="28" rx="4" fill="#111"/><path d="M8 24V9l13 12V6" fill="none" stroke="#777" stroke-width="3"/>'],
  ['Explorador', '<path d="M0 5q0-2 2-2h8l3 3h17v22H0z" fill="#e9a820"/><path d="M0 8h30v18q0 2-2 2H2q-2 0-2-2z" fill="#fdd24c"/><path d="M5 28v-5q0-3 3-3h14q3 0 3 3v5z" fill="#1276c6"/>', 'run'],
  ['Firefox', '<path d="M15 3l3-3q1 5 6 7 5 5 5 10a14 13 0 0 1-28 0Q1 9 5 4l2 3q4-2 8 0z" fill="#ff8a16"/><path d="M1 17a14 13 0 0 0 28 0q-4 8-14 7T1 17z" fill="#ff3f5f"/><circle cx="15" cy="16" r="6.500" fill="#8744e6"/><path d="M20 5q10 6 6 18 0-8-6-18z" fill="#ffd83a"/>'],
  ['Opera', '<ellipse cx="15" cy="15" rx="14" ry="14.500" fill="#f01a2c"/><ellipse cx="15" cy="15" rx="6" ry="10.500" fill="#202020"/>'],
  ['Word', '<path d="M8 1h21v7H8z" fill="#41a5ee"/><path d="M8 8h21v7H8z" fill="#2b7cd3"/><path d="M8 15h21v7H8z" fill="#185abd"/><path d="M8 22h21v6H8z" fill="#103f91"/><rect x="0" y="7" width="16" height="16" rx="1" fill="#185abd"/><path d="M3.500 11l2 8 2.500-7 2.500 7 2-8" fill="none" stroke="#fff" stroke-width="1.800"/>', 'run'],
  ['WhatsApp', '<path d="M15 1a14 14 0 1 1-7 26l-8 3 3-8A14 14 0 0 1 15 1z" fill="#fff"/><path d="M15 3a12 12 0 1 1-7 22l-5 2 2-5A12 12 0 0 1 15 3z" fill="#39c14f"/><path d="M10 8l3 4-2 2q2 4 5 5l2-2 4 3q-3 5-9 1-7-5-5-11z" fill="#fff"/>', 'run', '78'],
  ['Tableau', '<rect x="1" y="1" width="28" height="28" fill="#fff"/><g stroke-width="1.500">' + cross(15, 15, 4, '#2d6a8e') + cross(8, 9, 3, '#2d6a8e') + cross(22, 9, 3, '#2d6a8e') + cross(8, 21, 3, '#2d6a8e') + cross(22, 21, 3, '#2d6a8e') + cross(15, 5, 2, '#4e9bc0') + cross(15, 25, 2, '#4e9bc0') + cross(4, 15, 2, '#4e9bc0') + cross(26, 15, 2, '#4e9bc0') + '</g>', 'act'],
  ['Configuración', '<path d="M12 0h6l1 4 3 2 4-1 3 5-3 3v4l3 3-3 5-4-1-3 2-1 4h-6l-1-4-3-2-4 1-3-5 3-3v-4l-3-3 3-5 4 1 3-2z" fill="#8d96a0"/><circle cx="15" cy="15" r="7" fill="#f0f0f0"/><circle cx="15" cy="15" r="5.500" fill="#1268b3"/>', 'run'],
  ['Excel', '<path d="M8 1h21v14H8z" fill="#21a366"/><path d="M19 1h10v7H19z" fill="#33c481"/><path d="M8 15h21v13H8z" fill="#185c37"/><path d="M19 15h10v7H19z" fill="#107c41"/><rect x="0" y="7" width="16" height="16" rx="1" fill="#107c41"/><path d="M5 11l6 8M11 11l-6 8" stroke="#fff" stroke-width="2"/>', 'run']
];
define('tb-task', `:host{display:block;width:49px;height:50px}button{display:grid;place-items:center;width:49px;height:50px;border-radius:5px;position:relative}
.act{background:#2f2f2f}svg{overflow:visible}.run::after,.act::after{content:"";position:absolute;bottom:0;width:7px;height:4px;border-radius:2px;background:#999}.act::after{width:20px;background:#4cc2ff;bottom:0}
i{position:absolute;right:1px;top:3px;min-width:20px;height:20px;border-radius:10px;background:#4cc2ff;color:#000;font-style:normal;font-size:13px;line-height:20px;text-align:center;padding:0 4px}`,
  el => { const a = APPS[el.getAttribute('n')]; return `<button class="${a[2] || ''}" aria-label="${a[0]}"><svg width="30" height="30" viewBox="0 0 30 30">${a[1]}</svg>${a[3] ? `<i>${a[3]}</i>` : ''}</button>`; });
define('tb-taskbar', `:host{display:flex;box-sizing:border-box;align-items:center;height:60px;background:#202020;border-top:1px solid #444;color:#fff;font-size:14px;line-height:20px;padding:0 19px 0 23px}
.w{display:flex;gap:8px;align-items:center;width:397px;flex:none}.w p+p{color:#ccc}.s{display:flex;align-items:center;height:38px;width:273px;border-radius:19px;background:#f2f2f2;color:#222;margin:0 6px 0 18px;padding:0 4px 0 13px;gap:10px;box-sizing:border-box}
input{flex:1;min-width:0;border:0;background:none;outline:0;font-size:16px}input::placeholder{color:#555;opacity:1}
.a{display:flex;gap:6px;flex:1}.t{display:flex;align-items:center;gap:14px}.r{text-align:right}.c{text-align:center;margin:0 10px 0 13px}`,
  `<div class="w"><svg width="33" height="32" viewBox="0 0 33 32"><path d="M14 1q10 4 6 14L9 20q-8-2-7-4 14 0 12-15z" fill="#f7ab2e"/><path d="M8 30a7 7 0 0 1 0-13 8 8 0 0 1 15-1 7 7 0 0 1 3 14z" fill="#b8cdf3"/></svg><div><p>11°C</p><p>Mayorm. nublado</p></div></div>
  <button aria-label="Inicio"><svg width="29" height="29" viewBox="0 0 29 29"><path d="M0 1q0-1 1-1h13v14H0zM15 0h13q1 0 1 1v13H15zM0 15h14v14H1q-1 0-1-1zM15 15h14v13q0 1-1 1H15z" fill="#3db9f5"/></svg></button>
  <label class="s"><tb-icon name="search" size="20" weight="2"></tb-icon><input placeholder="Buscar" aria-label="Buscar"><svg width="28" height="28" viewBox="0 0 28 28"><path d="M14 1a13 13 0 1 1 0 26H1V14A13 13 0 0 1 14 1z" fill="#fff" stroke="#2286e0" stroke-width="2"/><path d="M9 5l4 2v9l5-2-3-4 6 3v4l-8 5-4-3z" fill="#1b8de0"/></svg></label>
  <div class="a">${APPS.map((_, i) => `<tb-task n="${i}"></tb-task>`).join('')}</div>
  <div class="t"><tb-icon name="up" size="16"></tb-icon><div class="c">ESP<br>LAA</div>
  <svg width="20" height="18" viewBox="0 0 20 18" fill="none" stroke="#fff" stroke-width="1.600"><path d="M1 7q9-9 18 0M4 10q6-6 12 0M7 13q3-3 6 0"/><circle cx="10" cy="16" r="1" fill="#fff"/></svg>
  <svg width="20" height="18" viewBox="0 0 20 18" fill="none" stroke="#fff" stroke-width="1.600"><path d="M1 6h3l5-4v14l-5-4H1zM12 6q2 3 0 6"/><path d="M14 4q4 5 0 10M17 2q5 7 0 14" stroke="#777"/></svg>
  <svg width="20" height="16" viewBox="0 0 22 16" fill="none" stroke="#fff" stroke-width="1.600"><rect x="1" y="2" width="17" height="12" rx="3"/><path d="M20 6v4"/><path d="M4 5h4v6H4z" fill="#fff"/></svg>
  <div class="r">0:17<br>19/09/2023</div></div>`);

define('tb-app', `:host{display:flex;flex-direction:column;min-height:100vh;position:relative}main{flex:1;display:grid;grid-template-columns:262px minmax(0,1fr) 400px}`,
  `<tb-titlebar>Tableau - Oil_and_Gas_10.0_es-ES - La licencia de Tableau expira en 14 días</tb-titlebar><tb-menubar></tb-menubar><tb-toolbar></tb-toolbar>
  <main><tb-side></tb-side><tb-canvas></tb-canvas><tb-guide></tb-guide></main><tb-tabs></tb-tabs><tb-status></tb-status><tb-taskbar></tb-taskbar><tb-showme></tb-showme>`);
</script>
</body>
</html>
